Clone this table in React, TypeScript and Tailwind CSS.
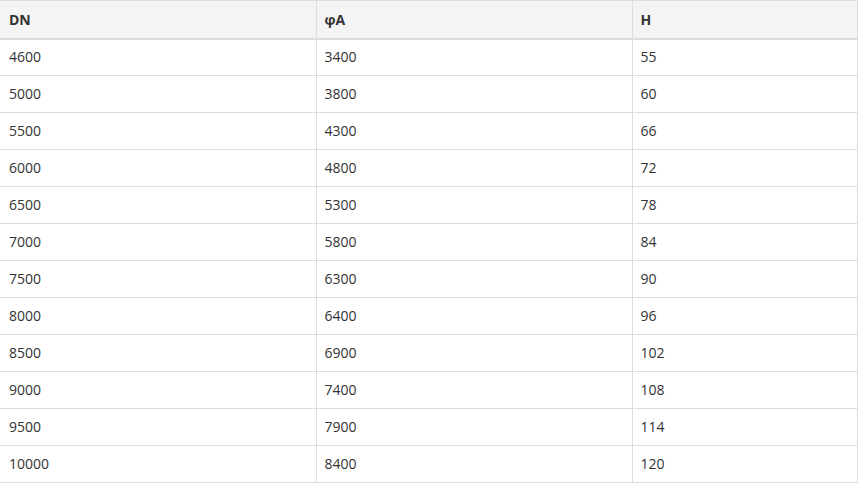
const rows: [string, string, string][] = [
  ["4600", "3400", "55"],
  ["5000", "3800", "60"],
  ["5500", "4300", "66"],
  ["6000", "4800", "72"],
  ["6500", "5300", "78"],
  ["7000", "5800", "84"],
  ["7500", "6300", "90"],
  ["8000", "6400", "96"],
  ["8500", "6900", "102"],
  ["9000", "7400", "108"],
  ["9500", "7900", "114"],
  ["10000", "8400", "120"],
];

const App = () => {
  return (
    <div className="w-[858px] bg-white font-['Open_Sans',sans-serif] text-[14px] text-[#333]">
      <table className="w-[858px] table-fixed border-collapse border-t border-r border-[#ddd]">
        <colgroup>
          <col className="w-[316px]" />
          <col className="w-[316px]" />
          <col />
        </colgroup>
        <thead>
          <tr className="h-[38px] bg-[#f4f4f4]">
            <th className="border-b-2 border-[#ddd] pl-[9px] pr-2 text-left font-bold">DN</th>
            <th className="border-b-2 border-l border-[#ddd] px-2 text-left font-bold">φA</th>
            <th className="border-b-2 border-l border-[#ddd] px-2 text-left font-bold">H</th>
          </tr>
        </thead>
        <tbody>
          {rows.map((r, i) => (
            <tr key={i} className="h-[37px]">
              <td className="border-b border-[#ddd] pl-[9px] pr-2 pb-[2px]">{r[0]}</td>
              <td className="border-b border-l border-[#ddd] px-2 pb-[2px]">{r[1]}</td>
              <td className="border-b border-l border-[#ddd] px-2 pb-[2px]">{r[2]}</td>
            </tr>
          ))}
        </tbody>
      </table>
    </div>
  );
};

export default App;
